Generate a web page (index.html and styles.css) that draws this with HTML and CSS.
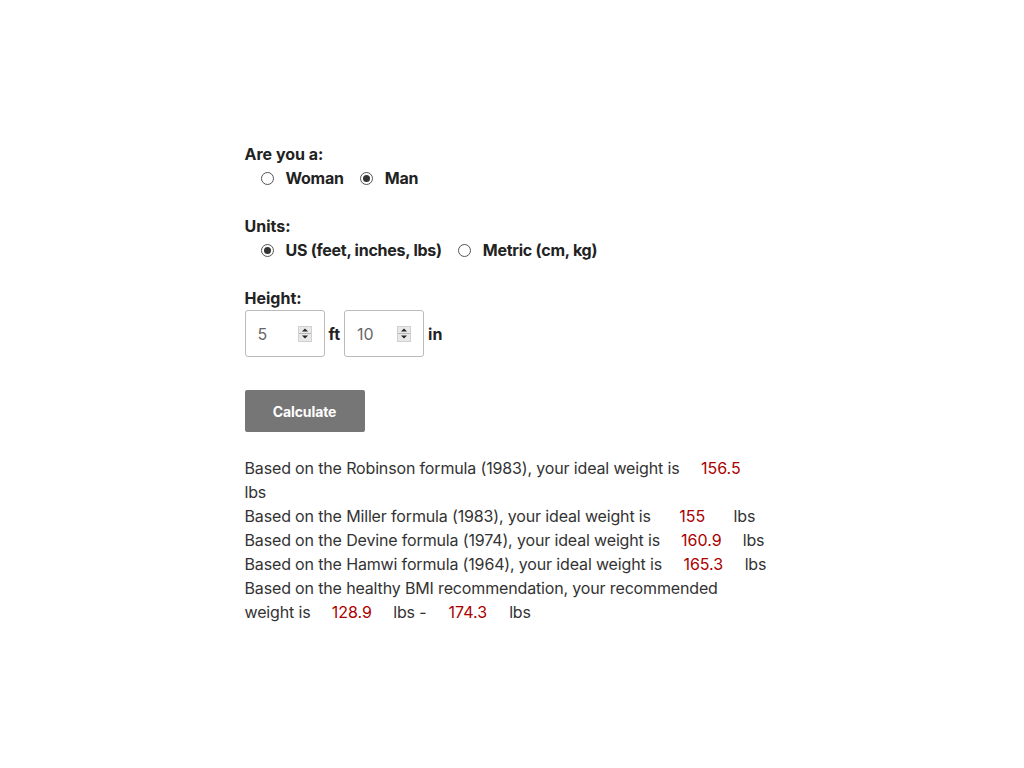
FILE: index.html
```html
<!DOCTYPE html>
<html lang="en">
<head>
<meta charset="utf-8">
<title>Ideal Weight Calculator</title>
<link rel="stylesheet" href="styles.css">
</head>
<body>
<main class="calc">
  <div class="group-label">Are you a:</div>
  <div class="options">
    <label class="opt"><span class="radio"></span><span class="opt-text">Woman</span></label>
    <label class="opt"><span class="radio checked"></span><span class="opt-text">Man</span></label>
  </div>

  <div class="group-label spaced">Units:</div>
  <div class="options">
    <label class="opt"><span class="radio checked"></span><span class="opt-text">US (feet, inches, lbs)</span></label>
    <label class="opt"><span class="radio"></span><span class="opt-text">Metric (cm, kg)</span></label>
  </div>

  <div class="group-label spaced">Height:</div>
  <div class="height-row">
    <div class="num-input"><span class="num-val">5</span><span class="spin"><span class="spin-btn up"></span><span class="spin-btn down"></span></span></div>
    <span class="unit">ft</span>
    <div class="num-input"><span class="num-val">10</span><span class="spin"><span class="spin-btn up"></span><span class="spin-btn down"></span></span></div>
    <span class="unit">in</span>
  </div>

  <button class="calc-btn" type="button">Calculate</button>

  <div class="results">
    <div>Based on the Robinson formula (1983), your ideal weight is <span class="val">156.5</span> lbs</div>
    <div>Based on the Miller formula (1983), your ideal weight is <span class="val">155</span> lbs</div>
    <div>Based on the Devine formula (1974), your ideal weight is <span class="val">160.9</span> lbs</div>
    <div>Based on the Hamwi formula (1964), your ideal weight is <span class="val">165.3</span> lbs</div>
    <div><span>Based on the healthy BMI recommendation, your recommended</span> <span>weight is</span> <span class="val">128.9</span> lbs - <span class="val">174.3</span> lbs</div>
  </div>
</main>
</body>
</html>
```

FILE: styles.css
```css
html, body {
  margin: 0;
  padding: 0;
  background: #fff;
}

body {
  font-family: "Inter", "Liberation Sans", sans-serif;
  font-size: 16px;
  line-height: 24px;
  color: #333;
}

.calc {
  width: 535px;
  margin: 0 auto;
  padding-top: 142px;
}

.group-label {
  font-weight: 700;
  color: #222;
}

.group-label.spaced {
  margin-top: 24px;
}

.options {
  display: flex;
  align-items: center;
  padding-left: 16px;
  height: 24px;
}

.opt {
  display: flex;
  align-items: center;
  margin-right: 16px;
  font-weight: 700;
  color: #222;
  letter-spacing: -0.25px;
}

.radio {
  box-sizing: border-box;
  width: 13px;
  height: 13px;
  border: 1px solid #555;
  border-radius: 50%;
  background: #fff;
  margin-right: 12px;
  display: flex;
  align-items: center;
  justify-content: center;
}

.radio.checked::after {
  content: "";
  width: 7px;
  height: 7px;
  border-radius: 50%;
  background: #333;
}

.height-row {
  display: flex;
  align-items: center;
}

.num-input {
  box-sizing: border-box;
  width: 80px;
  height: 47px;
  border: 1px solid #bbb;
  border-radius: 3px;
  display: flex;
  align-items: center;
  justify-content: space-between;
  padding: 0 12px 0 12px;
  color: #666;
}

.spin {
  display: flex;
  flex-direction: column;
  width: 14px;
  height: 16px;
  background: #e8e8e8;
  border: 1px solid #d0d0d0;
  box-sizing: border-box;
}

.spin-btn {
  flex: 1;
  position: relative;
}

.spin-btn.up {
  border-bottom: 1px solid #b8b8b8;
}

.spin-btn::after {
  content: "";
  position: absolute;
  left: 50%;
  top: 50%;
  transform: translate(-50%, -50%);
  border-left: 3px solid transparent;
  border-right: 3px solid transparent;
}

.spin-btn.up::after {
  border-bottom: 3px solid #222;
}

.spin-btn.down::after {
  border-top: 3px solid #222;
}

.unit {
  font-weight: 700;
  color: #222;
  margin: 0 4px 0 4px;
}

.calc-btn {
  display: block;
  margin-top: 33px;
  width: 120px;
  height: 42px;
  border: none;
  border-radius: 2px;
  background: #767676;
  color: #fff;
  font-family: inherit;
  font-size: 14px;
  font-weight: 700;
  letter-spacing: -0.1px;
  padding: 0;
}

.results {
  margin-top: 24px;
  max-width: 527px;
  letter-spacing: -0.15px;
}

.val {
  display: inline-block;
  width: 74px;
  text-align: center;
  color: #a00;
  letter-spacing: 0;
}
```
